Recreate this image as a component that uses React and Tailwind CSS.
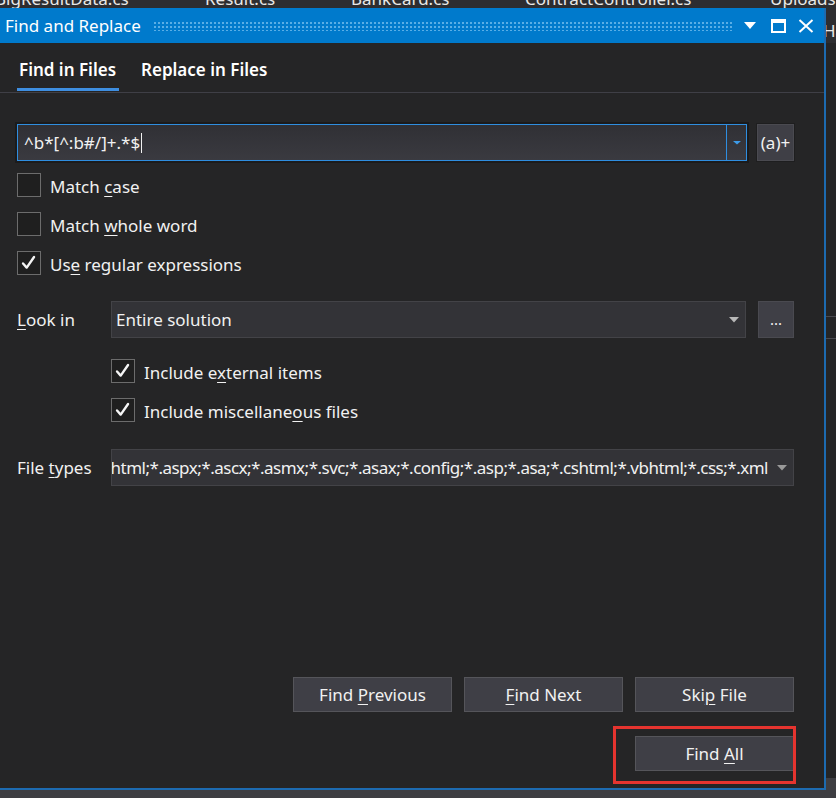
import React from "react";

const font = { fontFamily: '"Noto Sans", "Open Sans", sans-serif' };

function CheckMark() {
  return (
    <svg width="24" height="24" viewBox="0 0 24 24" fill="none">
      <path
        d="M5.5 12.5 L9.5 17 L17.5 5.5"
        stroke="#f5f5f5"
        strokeWidth="2.6"
        strokeLinecap="round"
        strokeLinejoin="round"
      />
    </svg>
  );
}

function Check({ checked, children, className = "" }) {
  return (
    <div className={`flex h-[24px] items-center ${className}`}>
      <span className="flex h-[24px] w-[24px] shrink-0 items-center justify-center border border-[#6c6c6c] bg-[#1f1f1f]">
        {checked && <CheckMark />}
      </span>
      <span className="ml-[9px] mt-[3px] text-[17px] leading-none text-[#f1f1f1]">{children}</span>
    </div>
  );
}

function Key({ children }) {
  return <span className="underline decoration-1 underline-offset-[3px]">{children}</span>;
}

function Arrow({ color = "#b8b8b8" }) {
  return (
    <svg width="10" height="6" viewBox="0 0 10 6">
      <path d="M0 0 H10 L5 5.5 Z" fill={color} />
    </svg>
  );
}

function Button({ children, className = "" }) {
  return (
    <button
      type="button"
      className={`flex h-[35px] w-[159px] items-center justify-center border border-[#55555a] bg-[#3f3f46] text-[17px] text-[#f1f1f1] ${className}`}
    >
      <span>{children}</span>
    </button>
  );
}

export default function App() {
  return (
    <div className="flex h-[798px] w-[836px] flex-col overflow-hidden bg-[#2d2d30]" style={font}>
      {/* editor tabs behind the dialog, cut off */}
      <div className="relative h-[8px] overflow-hidden bg-[#2d2d30] text-[17px] text-[#e8e8e8]">
        <div className="-mt-[14px] flex whitespace-nowrap">
          <span className="-ml-[5px] w-[210px]">BigResultData.cs</span>
          <span className="w-[146px]">Result.cs</span>
          <span className="w-[174px]">BankCard.cs</span>
          <span className="w-[245px]">ContractController.cs</span>
          <span>Uploads</span>
        </div>
      </div>

      <div className="flex h-[782px]">
        <div className="flex w-[826px] shrink-0 flex-col border-r-2 border-b-2 border-[#1d6bb0]">
          {/* title bar */}
          <div className="flex h-[35px] shrink-0 items-center bg-[#007acc] pl-[5px] pr-[10px]">
            <span className="text-[17px] text-white">Find and Replace</span>
            <div className="ml-[12px] mr-[12px] h-[10px] flex-1 bg-[radial-gradient(circle,#59aee6_0.9px,transparent_1.1px)] bg-[length:4px_4px]" />
            <svg width="12" height="8" viewBox="0 0 12 8" className="mr-[15px]">
              <path d="M0 0 H12 L6 7 Z" fill="#ffffff" />
            </svg>
            <svg width="15" height="14" viewBox="0 0 15 14" className="mr-[12px]">
              <rect x="1" y="1" width="13" height="12" fill="none" stroke="#ffffff" strokeWidth="2" />
              <rect x="1" y="1" width="13" height="3" fill="#ffffff" />
            </svg>
            <svg width="16" height="14" viewBox="0 0 16 14">
              <path d="M1.5 1 L14.5 13 M14.5 1 L1.5 13" stroke="#ffffff" strokeWidth="2" />
            </svg>
          </div>

          {/* body */}
          <div className="flex flex-1 flex-col bg-[#252526] pl-[17px] pr-[30px]">
            <div className="-ml-[17px] -mr-[30px] flex h-[50px] shrink-0 items-stretch border-b border-[#3f3f46] pl-[17px]">
              <div className="flex flex-col">
                <span className="mt-[14px] px-[2px] text-[17px] font-semibold text-white">Find in Files</span>
                <span className="mt-auto mb-[1px] h-[3px] w-[102px] bg-[#3e8ee0]" />
              </div>
              <div className="ml-[22px] flex flex-col">
                <span className="mt-[14px] text-[17px] font-semibold text-white">Replace in Files</span>
              </div>
            </div>

            {/* search box */}
            <div className="mt-[31px] flex h-[37px] shrink-0 items-stretch">
              <div className="flex w-[730px] items-stretch border border-[#2f8ee0] bg-[linear-gradient(#303035,#3a3a40)] shadow-[0_0_0_2px_#1b1b1c]">
                <div className="flex flex-1 items-center pl-[6px] text-[17px] text-[#f1f1f1]">
                  <span>^b*[^:b#/]+.*$</span>
                  <span className="ml-[1px] h-[20px] w-px bg-[#f1f1f1]" />
                </div>
                <div className="flex w-[20px] items-center justify-center border-l border-[#2f8ee0]">
                  <svg width="8" height="4" viewBox="0 0 8 4">
                    <path d="M0 0 H8 L4 3.5 Z" fill="#3d9be8" />
                  </svg>
                </div>
              </div>
              <div className="ml-[10px] flex w-[37px] items-center justify-center border border-[#4a4a50] bg-[#3f3f46] text-[17px] text-[#f1f1f1] shadow-[0_0_0_1px_#1e1e1f]">
                (a)+
              </div>
            </div>

            <Check className="mt-[12px]">
              Match <Key>c</Key>ase
            </Check>
            <Check className="mt-[15px]">
              Match <Key>w</Key>hole word
            </Check>
            <Check checked className="mt-[15px]">
              Us<Key>e</Key> regular expressions
            </Check>

            {/* look in */}
            <div className="mt-[26px] flex h-[37px] shrink-0 items-stretch">
              <div className="flex w-[94px] items-center text-[17px] text-[#f1f1f1]">
                <span>
                  <Key>L</Key>ook in
                </span>
              </div>
              <div className="flex w-[635px] items-center border border-[#434347] bg-[#333337] pl-[4px] pr-[6px]">
                <span className="flex-1 text-[17px] text-[#f1f1f1]">Entire solution</span>
                <Arrow />
              </div>
              <div className="ml-[12px] flex w-[36px] items-center justify-center border border-[#4a4a50] bg-[#3f3f46] text-[15px] text-[#f1f1f1]">
                ...
              </div>
            </div>

            <Check checked className="ml-[94px] mt-[21px]">
              Include e<Key>x</Key>ternal items
            </Check>
            <Check checked className="ml-[94px] mt-[15px]">
              Include miscellane<Key>o</Key>us files
            </Check>

            {/* file types */}
            <div className="mt-[27px] flex h-[37px] shrink-0 items-stretch">
              <div className="flex w-[94px] items-center text-[17px] text-[#f1f1f1]">
                <span>
                  File <Key>t</Key>ypes
                </span>
              </div>
              <div className="flex w-[683px] items-center overflow-hidden border border-[#434347] bg-[#333337] pr-[6px]">
                <div className="flex flex-1 justify-end overflow-hidden whitespace-nowrap text-[17px] tracking-[-0.5px] text-[#f1f1f1]">
                  <span className="pr-[9px]">
                    *.cs;*.vb;*.resx;*.xsd;*.wsdl;*.xaml;*.xml;*.htm;*.html;*.aspx;*.ascx;*.asmx;*.svc;*.asax;*.config;*.asp;*.asa;*.cshtml;*.vbhtml;*.css;*.xml
                  </span>
                </div>
                <Arrow color="#9a9a9a" />
              </div>
            </div>

            {/* buttons */}
            <div className="mt-auto flex justify-end gap-[12px]">
              <Button>
                Find <Key>P</Key>revious
              </Button>
              <Button>
                <Key>F</Key>ind Next
              </Button>
              <Button>
                Ski<Key>p</Key> File
              </Button>
            </div>
            <div className="mb-[17px] mt-[24px] flex justify-end">
              <div className="relative">
                <Button className="h-[34px] border-[#2f8ee0]">
                  Find <Key>A</Key>ll
                </Button>
                <div className="pointer-events-none absolute -bottom-[13px] -left-[22px] -right-[2px] -top-[10px] border-[3px] border-[#e5342f]" />
              </div>
            </div>
          </div>
        </div>

        {/* slice of the IDE to the right */}
        <div className="flex flex-1 flex-col overflow-hidden">
          <div className="h-[35px] overflow-hidden bg-[#2d2d30] pt-[10px] text-[17px] text-[#e8e8e8]">
            <span className="-ml-[3px] whitespace-nowrap">Ha</span>
          </div>
          <div className="h-[274px] border-b border-[#4a4a4f] bg-[#252526]" />
          <div className="h-[22px] border-b border-[#4a4a4f] bg-[#252526]" />
          <div className="flex-1 bg-[#252526]" />
          <div className="h-[12px] bg-[#3e3e42]" />
        </div>
      </div>

      <div className="h-[8px] bg-[#3e3e42]" />
    </div>
  );
}
